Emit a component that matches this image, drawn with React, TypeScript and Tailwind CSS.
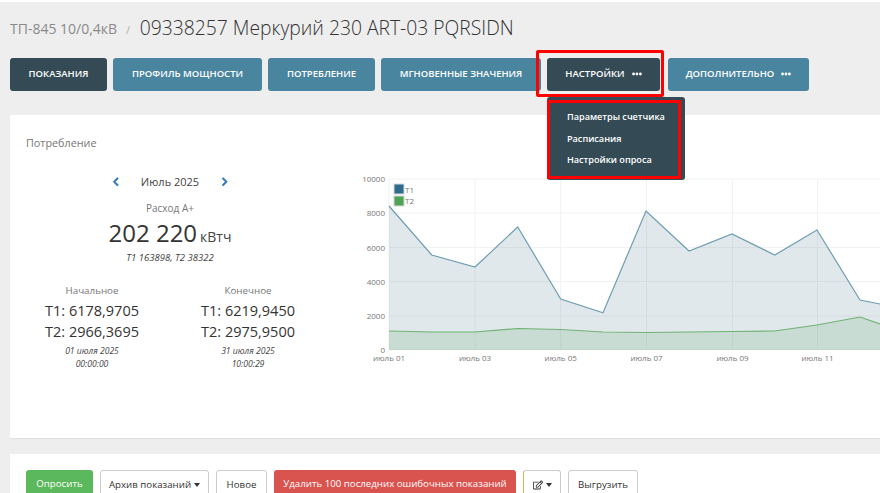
import { FaChevronLeft, FaChevronRight, FaEllipsisH, FaRegEdit } from "react-icons/fa";

const font = { fontFamily: "'Open Sans', sans-serif" };

const t1 = "389,206 431.7,255 475,267 517.7,227 560.7,299 603,312.7 646,211 689,251 732,234 774.7,255 817,230 860,300 880,304";
const t2 = "389,331 431.7,332 475,332 517.7,328.5 560.7,329.5 603,332 646,332.5 689,332 732,331.5 774.7,331 817,325 860,317 880,324";

function TabButton({ label, width, dark, dots }: { label: string; width: string; dark?: boolean; dots?: boolean }) {
  return (
    <div
      className={`${width} h-[33px] pb-px flex items-center justify-center gap-[7px] rounded-[3px] text-white text-[9.5px] font-semibold whitespace-nowrap ${dark ? "bg-[#344b56]" : "bg-[#4a85a0]"}`}
    >
      {label}
      {dots && <FaEllipsisH className="text-[10px]" />}
    </div>
  );
}

function Reading({ title, t1, t2, date, time }: { title: string; t1: string; t2: string; date: string; time: string }) {
  return (
    <div className="w-[156px] flex flex-col items-center text-center">
      <div className="text-[9.8px] leading-[14px] text-[#777777]">{title}</div>
      <div className="mt-[2px] text-[14.5px] leading-[21px] text-[#333333]">{t1}</div>
      <div className="text-[14.5px] leading-[21px] text-[#333333]">{t2}</div>
      <div className="mt-[3px] text-[8.6px] leading-[13px] italic text-[#444444]">{date}</div>
      <div className="text-[8.6px] leading-[13px] italic text-[#444444]">{time}</div>
    </div>
  );
}

function Chart() {
  const ticks = [
    { v: "10000", y: 179 },
    { v: "8000", y: 213 },
    { v: "6000", y: 247.5 },
    { v: "4000", y: 281.5 },
    { v: "2000", y: 316 },
    { v: "0", y: 350 },
  ];
  const days = [
    { l: "июль 01", x: 389 },
    { l: "июль 03", x: 475 },
    { l: "июль 05", x: 560.7 },
    { l: "июль 07", x: 646.5 },
    { l: "июль 09", x: 732.5 },
    { l: "июль 11", x: 817.5 },
  ];
  return (
    <svg width="520" height="195" viewBox="360 175 520 195" className="block shrink-0">
      {ticks.map((t) => (
        <g key={t.v}>
          <line x1="389" x2="880" y1={t.y} y2={t.y} stroke="#f1f2f2" strokeWidth="1" />
          <text x="385" y={t.y + 3} textAnchor="end" fontSize="8" fill="#777777">
            {t.v}
          </text>
        </g>
      ))}
      {days.map((d) => (
        <g key={d.l}>
          <line x1={d.x} x2={d.x} y1="179" y2="350" stroke="#f1f2f2" strokeWidth="1" />
          <text x={d.x} y="361" textAnchor="middle" fontSize="8" fill="#777777">
            {d.l}
          </text>
        </g>
      ))}
      <polygon points={`389,350 ${t1} 880,350`} fill="#3f6f80" fillOpacity="0.16" />
      <polygon points={`389,350 ${t2} 880,350`} fill="#4fa354" fillOpacity="0.16" />
      <polyline points={t1} fill="none" stroke="#6f9db2" strokeWidth="1.2" />
      <polyline points={t2} fill="none" stroke="#70b274" strokeWidth="1.2" />
      <rect x="394" y="184" width="10" height="10" fill="#2e6d8c" stroke="#d8d8d8" />
      <rect x="394" y="196" width="10" height="10" fill="#4fa354" stroke="#d8d8d8" />
      <text x="405" y="193" fontSize="8" fill="#777777">T1</text>
      <text x="405" y="204" fontSize="8" fill="#777777">T2</text>
    </svg>
  );
}

function OutlineButton({ children, width, extra }: { children: React.ReactNode; width: string; extra?: string }) {
  return (
    <div className={`${width} h-[30px] flex items-center justify-center gap-[3px] border border-[#cccccc] rounded-[3px] bg-white text-[9.7px] text-[#333333] whitespace-nowrap ${extra ?? ""}`}>
      {children}
    </div>
  );
}

function Caret() {
  return <span className="inline-block border-x-[3.5px] border-x-transparent border-t-[4px] border-t-[#333333]" />;
}

export default function App() {
  return (
    <div style={font} className="relative w-[880px] h-[493px] overflow-hidden bg-[#eeeeee]">
      <div className="h-[2px] bg-white" />

      <div className="h-[48px] pl-[10px] pt-[4px] flex items-center gap-[9px]">
        <span className="text-[14px] text-[#8a8a8a]">ТП-845 10/0,4кВ</span>
        <span className="text-[10px] text-[#aaaaaa] mt-[4px] mr-px">/</span>
        <span className="text-[19.3px] text-[#333333] font-light">09338257 Меркурий 230 ART-03 PQRSIDN</span>
      </div>

      <div className="mt-[8px] pl-[10px] flex gap-[6px]">
        <TabButton label="ПОКАЗАНИЯ" width="w-[97px]" dark />
        <TabButton label="ПРОФИЛЬ МОЩНОСТИ" width="w-[149px]" />
        <TabButton label="ПОТРЕБЛЕНИЕ" width="w-[107px]" />
        <TabButton label="МГНОВЕННЫЕ ЗНАЧЕНИЯ" width="w-[160px]" />
        <TabButton label="НАСТРОЙКИ" width="w-[113px]" dark dots />
        <div className="ml-[2px]">
          <TabButton label="ДОПОЛНИТЕЛЬНО" width="w-[141px]" dots />
        </div>
      </div>

      <div className="mt-[24px] ml-[10px] h-[323px] bg-white shadow-[0_1px_1px_rgba(0,0,0,0.06)]">
        <div className="pl-4 pt-[20px] text-[10.8px] leading-[15px] text-[#777777]">Потребление</div>
        <div className="flex">
          <div className="ml-[4px] w-[312px] pt-[24px] flex flex-col items-center">
            <div className="flex items-center gap-[17px] h-[16px] text-[11px] text-[#444444]">
              <FaChevronLeft className="text-[9.5px] text-[#337ab7] stroke-current [stroke-width:40]" />
              <span className="w-[66px] text-center">Июль 2025</span>
              <FaChevronRight className="text-[9.5px] text-[#337ab7] stroke-current [stroke-width:40]" />
            </div>
            <div className="mt-[11px] text-[10px] leading-[14px] text-[#777777]">Расход А+</div>
            <div className="mt-[4px] flex items-baseline gap-[3px] leading-[28px] text-[#333333]">
              <span className="text-[24px]">202 220</span>
              <span className="text-[14px] text-[#444444]">кВтч</span>
            </div>
            <div className="text-[9.5px] leading-[14px] italic text-[#444444]">T1 163898, T2 38322</div>
            <div className="mt-[19px] flex">
              <Reading title="Начальное" t1="T1: 6178,9705" t2="T2: 2966,3695" date="01 июля 2025" time="00:00:00" />
              <Reading title="Конечное" t1="T1: 6219,9450" t2="T2: 2975,9500" date="31 июля 2025" time="10:00:29" />
            </div>
          </div>
          <div className="ml-[34px] mt-[25px]">
            <Chart />
          </div>
        </div>
      </div>

      <div className="mt-[16px] ml-[10px] h-[60px] bg-white pl-4 pt-4 flex gap-[7px]">
        <div className="w-[67px] h-[30px] pb-px flex items-center justify-center rounded-[3px] bg-[#5cb85c] text-white text-[9.7px] font-medium whitespace-nowrap">
          Опросить
        </div>
        <OutlineButton width="w-[109px]">
          Архив показаний <Caret />
        </OutlineButton>
        <OutlineButton width="w-[51px]">Новое</OutlineButton>
        <div className="w-[242px] h-[30px] pb-px flex items-center justify-center rounded-[3px] bg-[#d9534f] text-white text-[9.7px] font-medium whitespace-nowrap">
          Удалить 100 последних ошибочных показаний
        </div>
        <OutlineButton width="w-[38px]" extra="border-l-[#f0ad4e]">
          <FaRegEdit className="text-[10px]" /> <Caret />
        </OutlineButton>
        <OutlineButton width="w-[70px]">Выгрузить</OutlineButton>
      </div>

      {/* red marks over the open menu */}
      <div className="absolute left-[536px] top-[50px] w-[128px] h-[47px] border-[3px] border-[#ff0000] rounded-[2px]" />
      <div className="absolute left-[547px] top-[97px] w-[138px] h-[83px] bg-[#344b56] rounded-[3px]">
        <div className="h-[79px] w-[134px] mt-[3px] border-[3px] border-[#ff0000] pl-[17px] text-white text-[9.1px] font-semibold whitespace-nowrap">
          <div className="mt-[3px] leading-[22px]">Параметры счетчика</div>
          <div className="leading-[21px]">Расписания</div>
          <div className="leading-[21px]">Настройки опроса</div>
        </div>
      </div>
    </div>
  );
}
